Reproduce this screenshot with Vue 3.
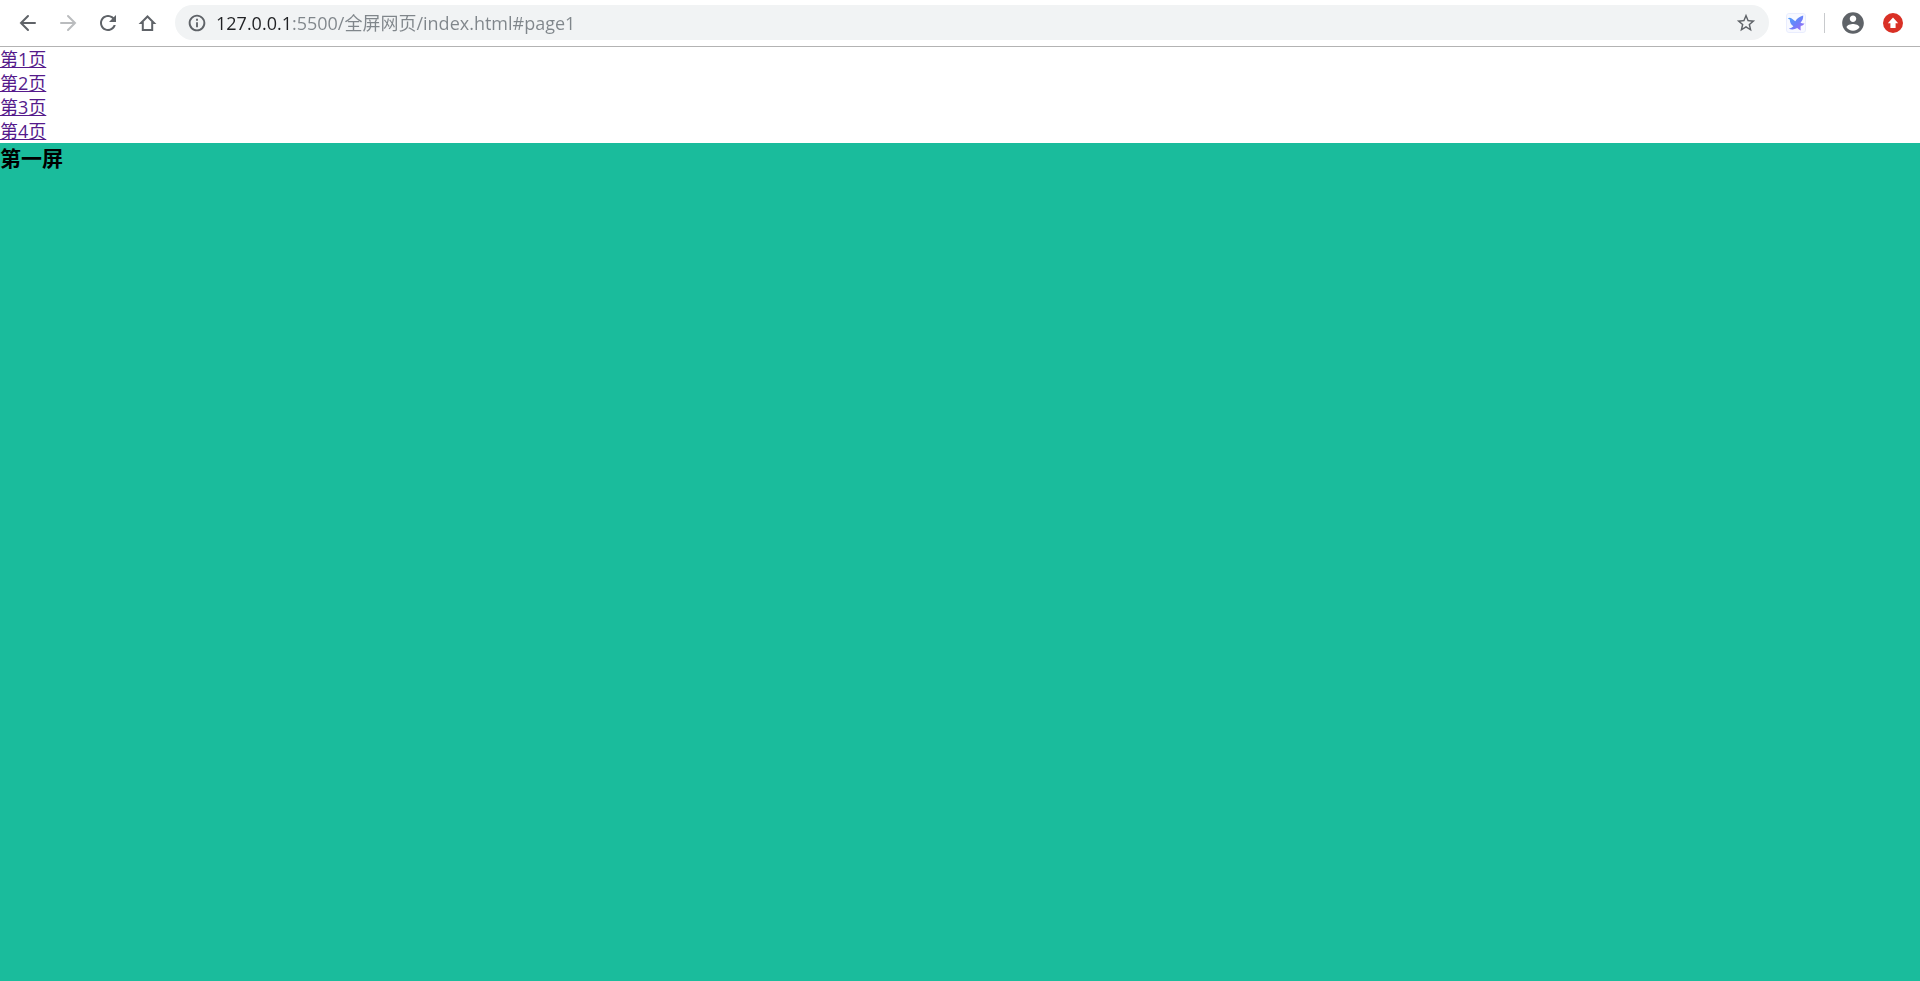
<script setup>
import { ref } from 'vue'

const address = ref('127.0.0.1:5500/全屏网页/index.html#page1')
const pages = [1, 2, 3, 4]
</script>

<template>
  <div class="window">
    <header class="toolbar">
      <button class="tool" type="button" aria-label="Back">
        <svg width="24" height="24" viewBox="0 0 24 24" class="line"><path d="M19 12H5M12 5l-7 7 7 7" /></svg>
      </button>
      <button class="tool" type="button" aria-label="Forward" disabled>
        <svg width="24" height="24" viewBox="0 0 24 24" class="line"><path d="M5 12h14M12 5l7 7-7 7" /></svg>
      </button>
      <button class="tool" type="button" aria-label="Reload">
        <svg width="24" height="24" viewBox="0 0 24 24"><path d="M17.650 6.350C16.200 4.900 14.210 4 12 4c-4.420 0-7.990 3.580-7.990 8s3.570 8 7.990 8c3.730 0 6.840-2.550 7.730-6h-2.080c-.82 2.330-3.040 4-5.650 4-3.310 0-6-2.690-6-6s2.690-6 6-6c1.660 0 3.140.69 4.220 1.780L13 11h7V4z" /></svg>
      </button>
      <button class="tool" type="button" aria-label="Home">
        <svg width="24" height="24" viewBox="0 0 24 24" class="home"><path d="M5 12h1.800v7h9.400v-7H18l-6.500-6.500z" /></svg>
      </button>

      <div class="omnibox">
        <button class="mini" type="button" aria-label="Site information">
          <svg width="20" height="20" viewBox="0 0 24 24"><path d="M10.900 17h2.200v-6h-2.200zm0-7.800h2.200V7h-2.200zM12 2C6.480 2 2 6.480 2 12s4.480 10 10 10 10-4.480 10-10S17.520 2 12 2zm0 17.700a7.700 7.700 0 1 1 0-15.400 7.700 7.700 0 0 1 0 15.400z" /></svg>
        </button>
        <input v-model="address" class="address" type="text" aria-label="Address" spellcheck="false" />
        <button class="mini" type="button" aria-label="Bookmark this page">
          <svg width="22" height="22" viewBox="0 0 24 24"><path d="m22 9.240-7.190-.62L12 2 9.190 8.630 2 9.240l5.460 4.730L5.820 21 12 17.270 18.180 21l-1.630-7.030zM12 15.400l-3.760 2.270 1-4.280-3.320-2.880 4.380-.38L12 6.100l1.710 4.040 4.380.38-3.320 2.880 1 4.280z" /></svg>
        </button>
      </div>

      <button class="tool" type="button" aria-label="Bird extension">
        <svg width="20" height="20" viewBox="0 0 20 20">
          <defs>
            <linearGradient id="wing" x1="0" y1="0" x2="1" y2="1">
              <stop offset="0" stop-color="#4aa8fb" />
              <stop offset=".5" stop-color="#6a82fa" />
              <stop offset="1" stop-color="#a866f5" />
            </linearGradient>
          </defs>
          <rect x=".5" y=".5" width="19" height="19" rx="2.500" fill="#f8f9ff" stroke="#e9edfe" />
          <path fill="url(#wing)" d="M1.800 5.500C3 4.600 4.500 4.500 5.700 5.600l3.600 2.700C11 5.200 13.500 4 17.200 2.500c.1 2.800-.6 5.200-2.700 7.200 1.300.8 2.700.9 4 .7-1 1.600-2.300 2.200-3.700 2.400-.4 1.800-.2 3.300 0 4.700-1.500-.7-2.700-1.500-3.600-2.500-2.600 1.700-5.700 1.700-8.400.7 2-.5 3.600-1.200 4.600-2.400C5 12 3.900 9.500 3.800 6.500z" />
        </svg>
      </button>
      <span class="divider"></span>
      <button class="tool" type="button" aria-label="Profile">
        <svg width="26" height="26" viewBox="0 0 24 24"><path d="M12 2C6.480 2 2 6.480 2 12s4.480 10 10 10 10-4.480 10-10S17.520 2 12 2zm0 3c1.660 0 3 1.340 3 3s-1.340 3-3 3-3-1.340-3-3 1.340-3 3-3zm0 14.200c-2.500 0-4.710-1.280-6-3.220.03-1.990 4-3.080 6-3.080 1.990 0 5.970 1.090 6 3.080-1.290 1.940-3.500 3.220-6 3.220z" /></svg>
      </button>
      <button class="tool" type="button" aria-label="Update browser">
        <svg width="20" height="20" viewBox="0 0 20 20">
          <circle cx="10" cy="10" r="10" fill="#d93025" />
          <path fill="#fff" d="M10 4.500l5.200 5.800h-2.600V15H7.400v-4.700H4.800z" />
        </svg>
      </button>
    </header>

    <nav class="links">
      <a v-for="n in pages" :key="n" :href="'#page' + n">第{{ n }}页</a>
    </nav>
    <main id="page1" class="screen">
      <h3>第一屏</h3>
    </main>
  </div>
</template>

<style>
body {
  margin: 0;
}
</style>

<style scoped>
.window {
  display: flex;
  flex-direction: column;
  min-height: 100vh;
  background: #fff;
  font-family: "Open Sans", "Noto Sans CJK SC", sans-serif;
}

.toolbar {
  display: flex;
  align-items: center;
  padding: 5px 7px 6px 8px;
  border-bottom: 1px solid #b3b3b3;
}

button {
  display: flex;
  align-items: center;
  justify-content: center;
  flex: none;
  padding: 0;
  border: 0;
  background: none;
  color: #5f6368;
  cursor: pointer;
}

button:disabled {
  color: #babcbe;
  cursor: default;
}

.tool {
  width: 40px;
  height: 35px;
}

svg {
  display: block;
  fill: currentColor;
}

.line,
.home {
  fill: none;
  stroke: currentColor;
  stroke-width: 2;
}

.line {
  stroke-linecap: round;
}

.omnibox {
  display: flex;
  align-items: center;
  flex: 1;
  min-width: 0;
  height: 35px;
  margin: 0 7px;
  padding: 0 12px 0 11px;
  box-sizing: border-box;
  border-radius: 18px;
  background: #f1f3f4;
}

.mini {
  width: 22px;
  height: 24px;
}

.address {
  flex: 1;
  min-width: 0;
  height: 28px;
  margin: 0 8px;
  padding: 0 0 2px;
  box-sizing: border-box;
  border: 0;
  outline: 0;
  background: linear-gradient(to right, #202124 76px, #80868b 76px);
  background-clip: text;
  -webkit-background-clip: text;
  color: transparent;
  caret-color: #202124;
  font-family: inherit;
  font-size: 18px;
}

.divider {
  width: 1px;
  height: 20px;
  margin: 0 8px;
  background: #c8cacd;
}

.links {
  display: flex;
  flex-direction: column;
  align-items: flex-start;
}

.links a {
  color: #551a8b;
  font-size: 18px;
  font-weight: 400;
  line-height: 24px;
}

.screen {
  flex: 1;
  background: #1abc9c;
}

h3 {
  margin: 0;
  color: #000;
  font-size: 21px;
  font-weight: 700;
  line-height: 30px;
}
</style>
